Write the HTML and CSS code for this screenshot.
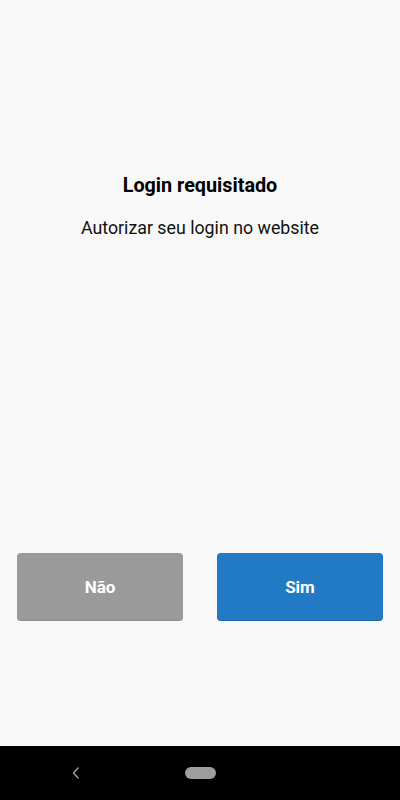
FILE: index.html
```html
<!DOCTYPE html>
<html lang="pt">
<head>
<meta charset="utf-8">
<link rel="stylesheet" href="styles.css">
</head>
<body>
<div class="screen">
  <main class="content">
    <h1 class="title">Login requisitado</h1>
    <p class="subtitle">Autorizar seu login no website</p>
    <div class="actions">
      <button class="btn btn-no">Não</button>
      <button class="btn btn-yes">Sim</button>
    </div>
  </main>
  <nav class="navbar">
    <svg class="back" width="10" height="14" viewBox="0 0 10 14"><path d="M7.5 1.5 L2.5 7 L7.5 12.5" fill="none" stroke="#9e9e9e" stroke-width="1.4"/></svg>
    <span class="home"></span>
  </nav>
</div>
</body>
</html>
```
FILE: styles.css
```css
html, body { margin: 0; padding: 0; }
body { font-family: Roboto, "Noto Sans", sans-serif; background: #f8f8f8; }
.screen { width: 400px; height: 800px; display: flex; flex-direction: column; }
.content { flex: 1; display: flex; flex-direction: column; align-items: center; padding-top: 174px; }
.title { margin: 0; font-size: 19.8px; line-height: 24px; font-weight: 700; color: #000; }
.subtitle { margin: 18px 0 0; font-size: 17.8px; line-height: 24px; color: #111; }
.actions { margin-top: 313px; width: 100%; box-sizing: border-box; padding: 0 17px; display: flex; justify-content: space-between; }
.btn { width: 166px; height: 67px; border: none; border-radius: 4px; font-family: Roboto, sans-serif; font-size: 17px; font-weight: 700; color: #fff; }
.btn-no { background: #9a9a9a; box-shadow: 0 1px 0 #8c8c8c; }
.btn-yes { background: #217ac3; box-shadow: 0 1px 0 #1a64a8; }
.navbar { height: 54px; background: #000; position: relative; }
.back { position: absolute; left: 71px; top: 20px; }
.home { position: absolute; left: 185px; top: 21px; width: 31px; height: 12px; border-radius: 6px; background: #9e9e9e; }
```
